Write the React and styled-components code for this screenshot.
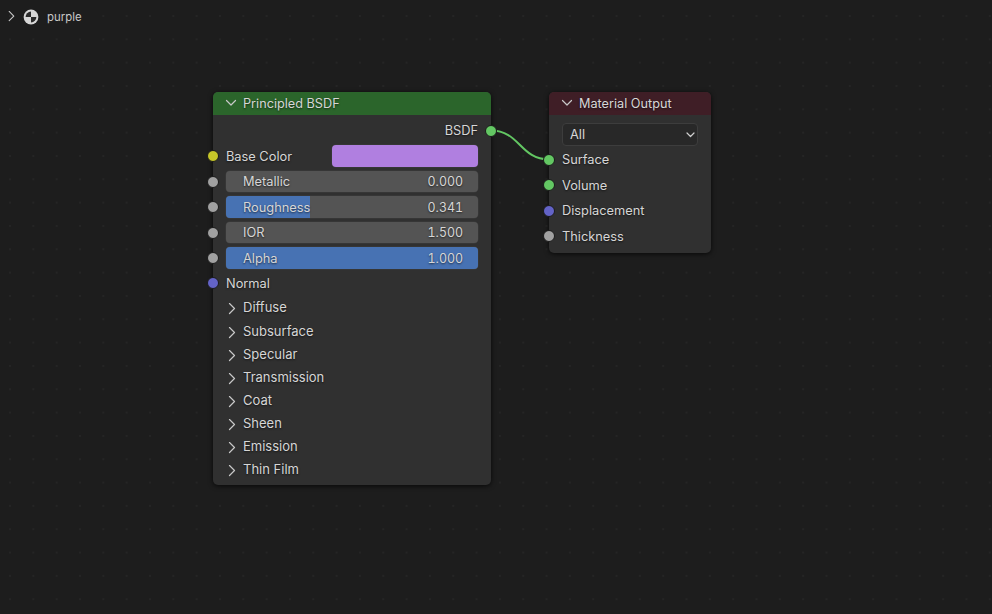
import styled, { createGlobalStyle } from "styled-components";

const GlobalStyle = createGlobalStyle`
  html, body {
    margin: 0;
    height: 100%;
    background: #1d1d1d;
    overflow: hidden;
  }
  #root {
    height: 100%;
  }
`;

const Chevron = ({ open, size = 12 }) => (
  <svg width={size} height={size} viewBox="0 0 12 12" fill="none" stroke="#c8c8c8" strokeWidth="1.2" strokeLinecap="round" strokeLinejoin="round">
    <path d={open ? "M1.5 3.5 L6 8 L10.5 3.5" : "M3.5 0.5 L8.5 5.5 L3.5 10.5"} />
  </svg>
);

const Node = ({ x, y, width, height, header, title, children }) => (
  <NodeBox $x={x} $y={y} $width={width} $height={height}>
    <NodeHeader $color={header}>
      <Chevron open />
      <span>{title}</span>
    </NodeHeader>
    <NodeBody>{children}</NodeBody>
  </NodeBox>
);

const SliderField = ({ label, value, fill }) => (
  <SocketRow $height={25.5}>
    <Socket $side="left" $color="#a1a1a1" />
    <Slider>
      <SliderFill style={{ width: `${fill * 100}%` }} />
      <SliderLabel>{label}</SliderLabel>
      <SliderValue>{value}</SliderValue>
    </Slider>
  </SocketRow>
);

const panels = ["Diffuse", "Subsurface", "Specular", "Transmission", "Coat", "Sheen", "Emission", "Thin Film"];
const outputs = [
  ["Surface", "#63c763"],
  ["Volume", "#63c763"],
  ["Displacement", "#6363c7"],
  ["Thickness", "#a1a1a1"],
];

export default function App() {
  return (
    <>
      <GlobalStyle />
      <Canvas>
        <Breadcrumb>
          <Chevron size={11} />
          <svg width="16" height="16" viewBox="0 0 16 16">
            <circle cx="8" cy="8" r="7.4" fill="#d6d6d6" />
            <path d="M8 2.6 A5.4 5.4 0 0 0 2.6 8 L8 8 Z" fill="#2a2a2a" />
            <path d="M8 8 L13.4 8 A5.4 5.4 0 0 1 8 13.4 Z" fill="#2a2a2a" />
          </svg>
          <MaterialName>purple</MaterialName>
        </Breadcrumb>

        <Link width="992" height="614">
          <path d="M491 130.5 C 520 130.5, 520 159.5, 549 159.5" fill="none" stroke="#63c763" strokeWidth="2" />
        </Link>

        <Node x={213} y={92} width={278} height={393} header="#2b652b" title="Principled BSDF">
          <Spacer $height={3} />
          <SocketRow $height={25.5} $end>
            <RowLabel>BSDF</RowLabel>
            <Socket $side="right" $color="#63c763" />
          </SocketRow>
          <SocketRow $height={25.25}>
            <Socket $side="left" $color="#c7c729" />
            <RowLabel>Base Color</RowLabel>
            <Swatch />
          </SocketRow>
          <SliderField label="Metallic" value="0.000" fill={0} />
          <SliderField label="Roughness" value="0.341" fill={0.335} />
          <SliderField label="IOR" value="1.500" fill={0} />
          <SliderField label="Alpha" value="1.000" fill={1} />
          <SocketRow $height={24.5}>
            <Socket $side="left" $color="#6363c7" />
            <RowLabel>Normal</RowLabel>
          </SocketRow>
          <Spacer $height={0.25} />
          {panels.map((name, i) => (
            <PanelRow key={name} $first={i === 0}>
              <Chevron />
              <span>{name}</span>
            </PanelRow>
          ))}
        </Node>

        <Node x={549} y={92} width={162} height={161} header="#3f1e26" title="Material Output">
          <Spacer $height={8} />
          <Select>
            <span>All</span>
            <svg width="9" height="9" viewBox="0 0 9 9" fill="none" stroke="#d0d0d0" strokeWidth="1.2" strokeLinecap="round" strokeLinejoin="round">
              <path d="M1 3 L4.5 6.5 L8 3" />
            </svg>
          </Select>
          <Spacer $height={1.25} />
          {outputs.map(([name, color]) => (
            <SocketRow key={name} $height={25.5}>
              <Socket $side="left" $color={color} />
              <RowLabel>{name}</RowLabel>
            </SocketRow>
          ))}
        </Node>
      </Canvas>
    </>
  );
}

const Canvas = styled.div`
  position: relative;
  width: 992px;
  height: 614px;
  background-color: #1d1d1d;
  background-image: radial-gradient(circle at center, #252525 0.9px, transparent 1.2px);
  background-size: 23.33px 23.33px;
  background-position: -1.67px 4.33px;
  font-family: Inter, "Noto Sans", sans-serif;
  font-size: 12.8px;
  color: #d6d6d6;
  overflow: hidden;
`;

const Breadcrumb = styled.div`
  display: flex;
  align-items: center;
  height: 33px;
  padding-left: 6px;
  gap: 6px;
  font-size: 11.4px;
  color: #c8c8c8;
`;

const MaterialName = styled.span`
  margin-left: 2px;
`;

const Link = styled.svg`
  position: absolute;
  inset: 0;
`;

const NodeBox = styled.div`
  position: absolute;
  left: ${(p) => p.$x}px;
  top: ${(p) => p.$y}px;
  width: ${(p) => p.$width}px;
  height: ${(p) => p.$height}px;
  display: flex;
  flex-direction: column;
  background: #303030;
  border-radius: 5px;
  box-shadow: 0 1px 5px rgba(0, 0, 0, 0.75);
`;

const NodeHeader = styled.div`
  display: flex;
  align-items: center;
  gap: 6px;
  height: 23px;
  padding: 0 12px 1px;
  box-sizing: border-box;
  font-size: 12.7px;
  background: ${(p) => p.$color};
  border-radius: 5px 5px 0 0;
  text-shadow: 0 1px 2px rgba(0, 0, 0, 0.6);
`;

const NodeBody = styled.div`
  display: flex;
  flex-direction: column;
  padding: 0 13px;
`;

const Spacer = styled.div`
  height: ${(p) => p.$height}px;
  flex: none;
`;

const SocketRow = styled.div`
  position: relative;
  display: flex;
  align-items: center;
  justify-content: ${(p) => (p.$end ? "flex-end" : "flex-start")};
  height: ${(p) => p.$height}px;
  flex: none;
`;

const RowLabel = styled.span`
  text-shadow: 0 1px 2px rgba(0, 0, 0, 0.6);
`;

const Socket = styled.span`
  position: absolute;
  top: 50%;
  ${(p) => p.$side}: -13px;
  width: 10px;
  height: 10px;
  margin-top: -6px;
  margin-${(p) => p.$side}: -6px;
  background: ${(p) => p.$color};
  border: 1px solid #1a1a1a;
  border-radius: 50%;
`;

const Swatch = styled.div`
  width: 146px;
  height: 21.5px;
  margin-left: auto;
  background: #b07fe0;
  border-radius: 4px;
  box-shadow: 0 0 0 0.5px #3d3d3d;
`;

const Slider = styled.div`
  position: relative;
  flex: 1;
  height: 21.5px;
  box-sizing: border-box;
  display: flex;
  align-items: center;
  justify-content: space-between;
  padding: 0 15px 0 17px;
  background: #545454;
  border-radius: 4px;
  box-shadow: 0 0 0 0.5px #3d3d3d;
  overflow: hidden;
  text-shadow: 0 1px 2px rgba(0, 0, 0, 0.6);
`;

const SliderFill = styled.div`
  position: absolute;
  left: 0;
  top: 0;
  bottom: 0;
  background: #4772b3;
`;

const SliderLabel = styled.span`
  position: relative;
`;

const SliderValue = styled.span`
  position: relative;
  font-size: 12.4px;
  font-variant-numeric: tabular-nums;
`;

const PanelRow = styled.div`
  display: flex;
  align-items: center;
  gap: 5px;
  height: 23px;
  margin-bottom: ${(p) => (p.$first ? 1 : 0)}px;
  flex: none;
  font-size: 13px;
  text-shadow: 0 1px 2px rgba(0, 0, 0, 0.6);

  svg {
    margin-top: 3px;
  }
`;

const Select = styled.div`
  display: flex;
  align-items: center;
  justify-content: space-between;
  height: 22.5px;
  flex: none;
  box-sizing: border-box;
  padding: 0 2px 0 7px;
  background: #282828;
  border: 1px solid #3d3d3d;
  border-radius: 4px;
`;
